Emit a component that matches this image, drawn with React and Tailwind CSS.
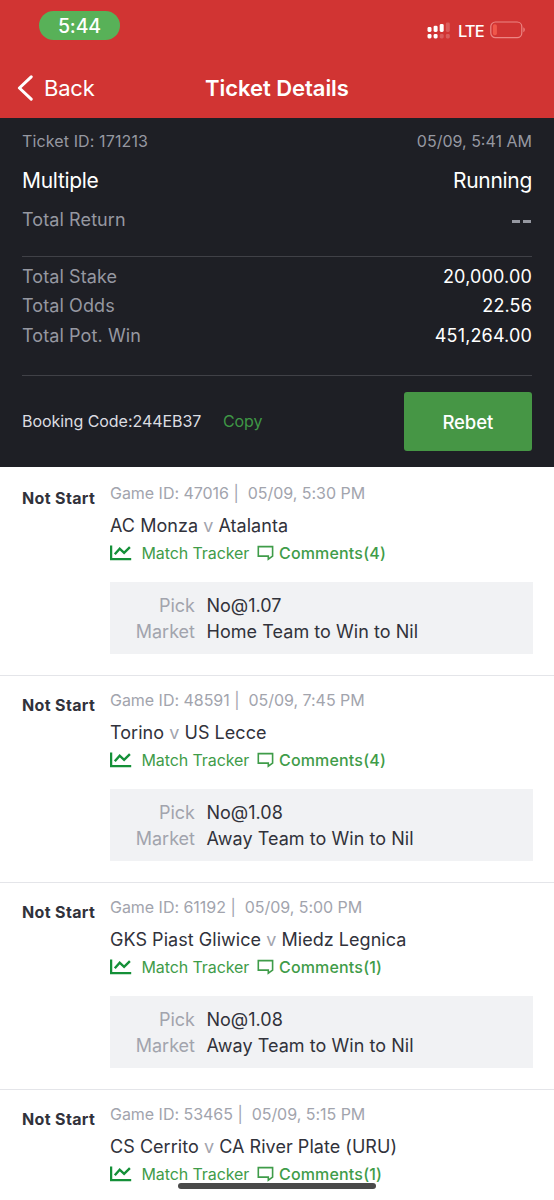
import React from 'react'

const games = [
    { id: '47016', time: '05/09, 5:30 PM', home: 'AC Monza', away: 'Atalanta', comments: 4, pick: 'No@1.07', market: 'Home Team to Win to Nil' },
    { id: '48591', time: '05/09, 7:45 PM', home: 'Torino', away: 'US Lecce', comments: 4, pick: 'No@1.08', market: 'Away Team to Win to Nil' },
    { id: '61192', time: '05/09, 5:00 PM', home: 'GKS Piast Gliwice', away: 'Miedz Legnica', comments: 1, pick: 'No@1.08', market: 'Away Team to Win to Nil' },
    { id: '53465', time: '05/09, 5:15 PM', home: 'CS Cerrito', away: 'CA River Plate (URU)', comments: 1 },
]

const totals = [
    { label: 'Total Stake', value: '20,000.00' },
    { label: 'Total Odds', value: '22.56' },
    { label: 'Total Pot. Win', value: '451,264.00' },
]

const SignalIcon = () => (
    <svg className='w-6 h-[17px]' viewBox='0 0 24 17' fill='white'>
        <rect x='0.5' y='5' width='4' height='5' rx='1.4' />
        <rect x='6.6' y='3.7' width='4' height='6.3' rx='1.4' />
        <rect x='12.7' y='2' width='4' height='8' rx='1.4' />
        <rect x='18.8' y='0.5' width='4' height='9.5' rx='1.4' opacity='0.2' />
        <rect x='0.5' y='12' width='4' height='4.4' rx='1.4' />
        <rect x='6.6' y='12' width='4' height='4.4' rx='1.4' />
        <rect x='12.7' y='12' width='4' height='4.4' rx='1.4' opacity='0.2' />
        <rect x='18.8' y='12' width='4' height='4.4' rx='1.4' opacity='0.2' />
    </svg>
)

const BatteryIcon = () => (
    <svg className='w-9 h-[18px]' viewBox='0 0 36 18' fill='none'>
        <rect x='0.8' y='1' width='31' height='15.6' rx='4.6' stroke='#ec8583' strokeWidth='1.2' />
        <rect x='2.9' y='3.2' width='4' height='11' rx='1.8' fill='#f0574a' />
        <path d='M33.4 6.3c1.9 1 1.9 4 0 5z' fill='#ec8583' />
    </svg>
)

const TrackerIcon = () => (
    <svg className='w-[22px] h-4' viewBox='0 0 22 16' fill='none' stroke='#149038'>
        <path d='M1.1 0.5V14.1H21.2' strokeWidth='2.3' />
        <path d='M4.8 9.2L9.7 3.7L14.1 7.8L19.9 2.2' strokeWidth='2.4' />
    </svg>
)

const CommentIcon = () => (
    <svg className='w-[17px] h-4' viewBox='0 0 17 16' fill='none' stroke='#3f9c49' strokeWidth='1.6'>
        <path d='M1.3 1.6H15.6V11.1L11.3 14.2V11.1H1.3Z' />
    </svg>
)

const Header = () => (
    <div className='h-[118px] bg-[#d13433] text-white'>
        {/* Status bar */}
        <div className='flex items-start justify-between h-[58px] pl-[39px] pr-7 pt-[11px]'>
            <div className='w-[81px] h-[29px] rounded-full bg-[#58b158] text-center text-[19.5px] leading-[30px] font-medium tracking-[-0.1px]'>5:44</div>
            <div className='flex items-center h-[18px] mt-[10px]'>
                <SignalIcon />
                <p className='w-[26px] ml-[7px] text-[16.5px] leading-[20px] pt-[2px] font-medium tracking-[-0.9px]'>LTE</p>
                <div className='ml-[6px]'><BatteryIcon /></div>
            </div>
        </div>
        {/* Title bar */}
        <div className='grid grid-cols-3 items-center h-[60px] pl-[17px] pr-[17px]'>
            <div className='flex items-center gap-[11px] cursor-pointer'>
                <svg className='w-4 h-[26px]' viewBox='0 0 16 26' fill='none' stroke='white' strokeWidth='3' strokeLinecap='round' strokeLinejoin='round'>
                    <path d='M14.2 1.8L2.4 13L14.2 24.2' />
                </svg>
                <p className='text-[22px] leading-[28px] tracking-[-0.2px]'>Back</p>
            </div>
            <p className='text-center whitespace-nowrap text-[22px] leading-[28px] font-semibold tracking-[-0.05px]'>Ticket Details</p>
        </div>
    </div>
)

const Summary = () => (
    <div className='h-[349px] bg-[#1e1f25] pl-[22px] pr-[22px] pt-3 text-[#9698a1]'>
        <div className='flex justify-between text-[16px] leading-[22px]'>
            <p className='tracking-[0.12px]'>Ticket ID: 171213</p>
            <p>05/09, 5:41 AM</p>
        </div>
        <div className='flex justify-between mt-[14px] text-[21px] leading-[30px] tracking-[-0.3px] text-white'>
            <p>Multiple</p>
            <p>Running</p>
        </div>
        <div className='flex justify-between items-center mt-[11px] text-[18px] leading-[26px] tracking-[0.1px]'>
            <p>Total Return</p>
            <div className='flex gap-[3px] pt-[3px] mr-px'>
                <span className='w-2 h-[3px] bg-[#9698a1]'></span>
                <span className='w-2 h-[3px] bg-[#9698a1]'></span>
            </div>
        </div>
        <div className='h-px mt-[23px] bg-[#404147]'></div>
        <div className='pt-[4.5px] text-[18px] leading-[29.5px]'>
            {totals.map((item) => (
                <div key={item.label} className='flex justify-between'>
                    <p className='tracking-[0.1px]'>{item.label}</p>
                    <p className='text-white tracking-[0.15px]'>{item.value}</p>
                </div>
            ))}
        </div>
        <div className='h-px mt-[24.5px] bg-[#404147]'></div>
        <div className='flex items-center mt-4 text-[16px] leading-[22px]'>
            <p className='text-[#dcdde1] w-[201px] whitespace-nowrap tracking-[-0.05px]'>Booking Code:244EB37</p>
            <p className='text-[#3f9745] cursor-pointer tracking-[-0.1px]'>Copy</p>
            <button className='ml-auto w-[128.5px] h-[59px] pt-px rounded-[3px] bg-[#469645] text-white text-[18.5px] font-medium tracking-[-0.1px]'>Rebet</button>
        </div>
    </div>
)

const GameItem = ({ game }) => (
    <div className='flex h-[207px] pl-[22px] pr-[21.5px] pt-[13px] border-b border-[#e4e5e9]'>
        <p className='w-[88px] shrink-0 mt-[5px] text-[16px] leading-[22px] font-bold tracking-[0.35px] text-[#31323b] whitespace-nowrap'>Not Start</p>
        <div className='flex-1'>
            <p className='text-[16px] leading-[22px] tracking-[-0.03px] text-[#a2a4ad] whitespace-pre'>Game ID: {game.id} |{'  '}{game.time}</p>
            <p className='mt-[7px] text-[18px] leading-[30px] tracking-[0.04px] text-[#31323b]'>
                {game.home} <span className='text-[#a2a4ad]'>v</span> {game.away}
            </p>
            <div className='flex items-center h-6 text-[16px] text-[#3f9c49]'>
                <TrackerIcon />
                <p className='w-[108.5px] ml-[9.5px] whitespace-nowrap tracking-[-0.1px]'>Match Tracker</p>
                <div className='ml-[7px]'><CommentIcon /></div>
                <p className='ml-[5px] font-medium tracking-[0.17px]'>Comments({game.comments})</p>
            </div>
            {game.pick && (
                <div className='h-[72px] mt-[17px] py-[11px] bg-[#f1f2f4] text-[18px] leading-[25.5px]'>
                    <div className='flex'>
                        <p className='w-[85px] mr-[11.5px] text-right text-[#a2a4ad]'>Pick</p>
                        <p className='text-[#31323b]'>{game.pick}</p>
                    </div>
                    <div className='flex'>
                        <p className='w-[85px] mr-[11.5px] text-right text-[#a2a4ad]'>Market</p>
                        <p className='text-[#31323b] tracking-[0.05px]'>{game.market}</p>
                    </div>
                </div>
            )}
        </div>
    </div>
)

const App = () => {
    return (
        <div className="relative w-[554px] h-[1200px] overflow-hidden bg-white font-['Inter','Liberation_Sans',sans-serif]">
            <Header />
            <Summary />
            <div className='pt-[2px]'>
                {games.map((game) => (
                    <GameItem key={game.id} game={game} />
                ))}
            </div>
            {/* Home indicator */}
            <div className='absolute left-[178px] top-[1183px] w-[198px] h-[6px] rounded-full bg-[#4a4a4a]'></div>
        </div>
    )
}

export default App
